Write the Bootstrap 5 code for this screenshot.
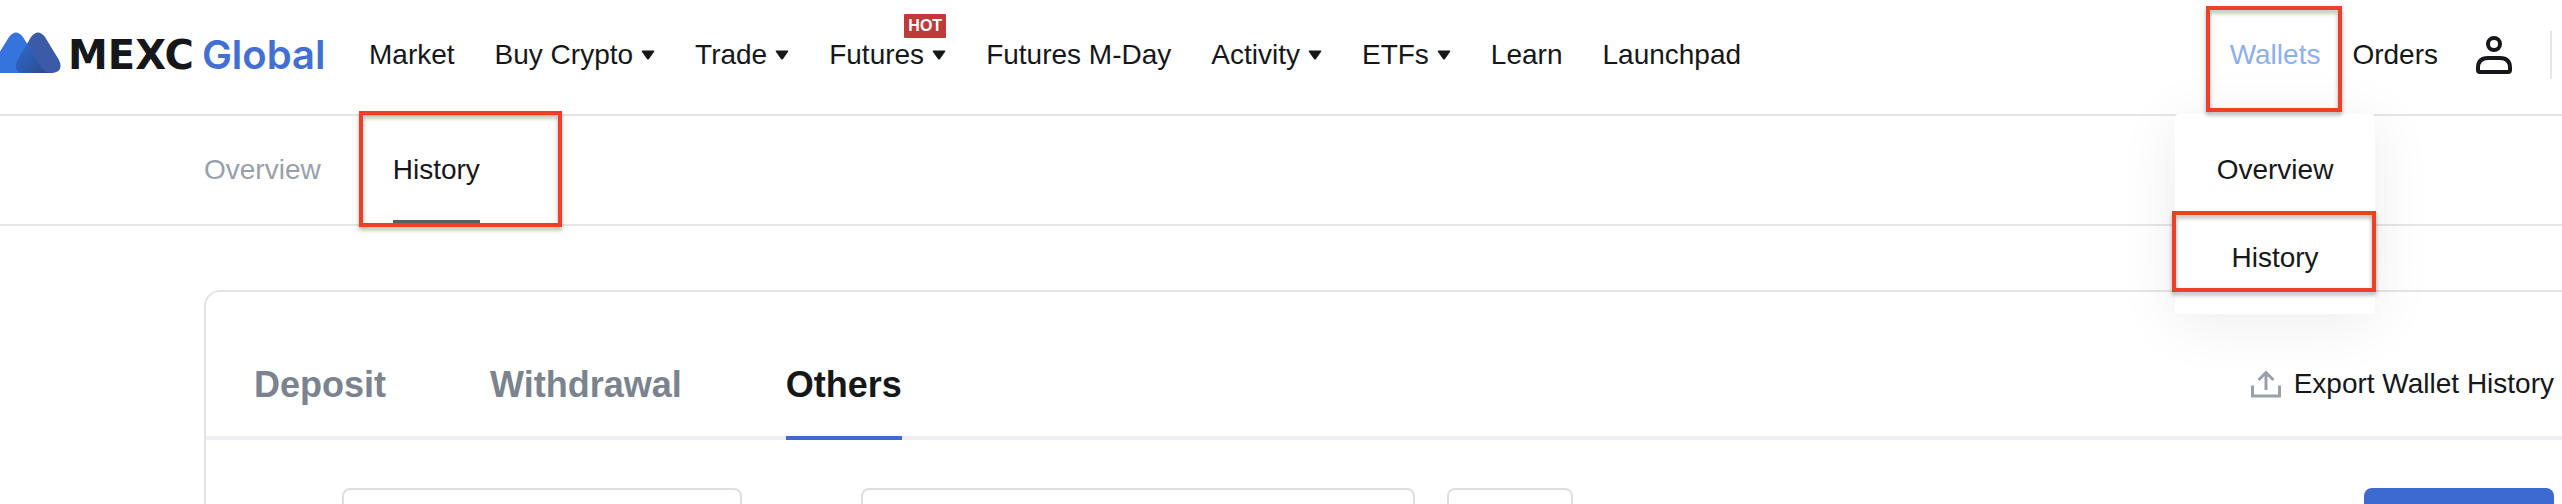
<!DOCTYPE html>
<html lang="en">
<head>
<meta charset="utf-8">
<meta name="viewport" content="width=device-width, initial-scale=1">
<title>MEXC Global - Wallet History</title>
<link href="https://cdn.jsdelivr.net/npm/bootstrap@5.3.0/dist/css/bootstrap.min.css" rel="stylesheet">
<style>
  :root { --ink: #16171a; --line: #e6e6e6; --brand: #3c6acf; --mark: #ee4027; }
  body { font-family: "Liberation Sans", Arial, sans-serif; font-size: 28px; line-height: 40px; color: var(--ink); background: #fff; }
  a { color: inherit; text-decoration: none; }
  .topbar { height: 116px; border-bottom: 2px solid var(--line); padding: 0 10px 4px 0; }
  .brand-link { width: 369px; padding-bottom: 4px; }
  .brand-mark { width: 62px; height: 42px; margin-right: 6px; }
  .brand-name { font: 700 40px/48px "DejaVu Sans", sans-serif; padding-top: 4px; }
  .brand-region { font: 600 40px/48px Inter, sans-serif; color: #4270d2; margin-left: 8px; padding-top: 4px; }
  .main-menu { gap: 40px; }
  .main-menu a { gap: 8px; }
  .caret { width: 14px; height: 10px; }
  .hot { top: 14px; padding: 0 4px; background: #c03a3a; color: #fff; font-weight: 700; font-size: 16px; line-height: 24px; border-radius: 1px; }
  .user-menu { gap: 32px; }
  .user-btn { margin-left: 6px; width: 36px; height: 38px; }
  .divider { width: 2px; height: 48px; background: var(--line); margin-left: 6px; }
  .wallet-link { color: #8cb0ee; }
  /* red frames that call out the steps */
  .callout::after { content: ""; position: absolute; z-index: 6; border: 4px solid var(--mark); filter: drop-shadow(0 3px 2px rgba(0,0,0,.3)); pointer-events: none; }
  .wallet-item.callout::after { inset: 6px -22px -2px -24px; }
  .wallet-menu { width: 200px; height: 200px; margin-top: 4px; padding: 12px 0; background: #fff; border-radius: 4px; box-shadow: 0 8px 60px rgba(0,0,0,.08); z-index: 5; }
  .wallet-menu a { display: block; line-height: 88px; text-align: center; }
  .wallet-menu .callout::after { inset: -3px -1px 10px -3px; }
  .subbar { height: 110px; border-bottom: 2px solid var(--line); padding-left: 204px; gap: 72px; }
  .subbar a { line-height: 108px; color: #98a1aa; }
  .subbar a.active { color: var(--ink); box-shadow: inset 0 -4px #5b5f68; }
  .subbar .callout::after { inset: -5px -82px -3px -34px; }
  .panel { margin: 64px 0 0 204px; border: 2px solid #e4e4e4; border-width: 2px 0 0 2px; border-radius: 16px 0 0 0; }
  .tab-row { height: 148px; border-bottom: 4px solid #edeff2; padding: 0 8px 0 48px; }
  .tab-list { gap: 104px; margin-bottom: -4px; }
  .tab-list a { display: block; font-size: 36px; font-weight: 700; line-height: 44px; padding: 71px 0 29px; border-bottom: 4px solid transparent; color: #7b848e; }
  .tab-list a.active { color: #16171a; border-color: var(--brand); }
  .export-btn { gap: 13px; padding: 0; border: 0; background: none; color: inherit; margin-top: 40px; }
  .filters { padding: 48px 8px 0 136px; }
  .field { height: 80px; border: 2px solid #dedede; border-radius: 8px; background: #fff; padding: 0 16px; }
  .field-type { width: 400px; margin-right: 119px; }
  .field-date { width: 554px; margin-right: 32px; }
  .field-short { width: 126px; }
  .search-btn { width: 190px; height: 80px; border: 0; border-radius: 8px; background: var(--brand); }
</style>
</head>
<body>
<div class="vh-100 overflow-hidden">
  <header class="topbar d-flex align-items-center">
    <a class="brand-link d-flex align-items-center flex-shrink-0" href="#">
      <svg class="brand-mark" viewBox="0 0 62 42" aria-hidden="true">
        <defs>
          <linearGradient id="fold" x1="0" y1=".2" x2="1" y2=".8"><stop offset=".4" stop-color="#2f66c4"/><stop offset="1" stop-color="#2b4b8e"/></linearGradient>
          <clipPath id="rightPeak"><path d="M31 5Q38-4 45 5L59 28Q64 39 53 41L22 41Q13 39 17 29Z"/></clipPath>
        </defs>
        <path d="M31 5Q38-4 45 5L59 28Q64 39 53 41L22 41Q13 39 17 29Z" fill="#3b5aa8"/>
        <path d="M9 5Q16-4 23 5L42 36Q45 41 52 41L-4 41L-4 26Z" fill="#3474dc"/>
        <path d="M9 5Q16-4 23 5L42 36Q45 41 52 41L-4 41L-4 26Z" fill="url(#fold)" clip-path="url(#rightPeak)"/>
      </svg>
      <span class="brand-name">MEXC</span><span class="brand-region">Global</span>
    </a>
    <nav class="h-100" aria-label="Main">
      <ul class="main-menu list-unstyled d-flex mb-0 h-100 text-nowrap">
        <li class="d-flex"><a class="d-flex align-items-center" href="#">Market</a></li>
        <li class="d-flex"><a class="d-flex align-items-center" href="#">Buy Crypto <svg class="caret" viewBox="0 0 14 10"><path d="M1.500 0.500h11q1.500 0 .6 1.300L8 9q-1 1-2 0L.9 1.800Q0 .5 1.500.5z" fill="#16171a"/></svg></a></li>
        <li class="d-flex"><a class="d-flex align-items-center" href="#">Trade <svg class="caret" viewBox="0 0 14 10"><path d="M1.500 0.500h11q1.500 0 .6 1.300L8 9q-1 1-2 0L.9 1.800Q0 .5 1.500.5z" fill="#16171a"/></svg></a></li>
        <li class="d-flex position-relative"><a class="d-flex align-items-center" href="#">Futures <svg class="caret" viewBox="0 0 14 10"><path d="M1.500 0.500h11q1.500 0 .6 1.300L8 9q-1 1-2 0L.9 1.800Q0 .5 1.500.5z" fill="#16171a"/></svg></a><span class="hot position-absolute end-0">HOT</span></li>
        <li class="d-flex"><a class="d-flex align-items-center" href="#">Futures M-Day</a></li>
        <li class="d-flex"><a class="d-flex align-items-center" href="#">Activity <svg class="caret" viewBox="0 0 14 10"><path d="M1.500 0.500h11q1.500 0 .6 1.300L8 9q-1 1-2 0L.9 1.800Q0 .5 1.500.5z" fill="#16171a"/></svg></a></li>
        <li class="d-flex"><a class="d-flex align-items-center" href="#">ETFs <svg class="caret" viewBox="0 0 14 10"><path d="M1.500 0.500h11q1.500 0 .6 1.300L8 9q-1 1-2 0L.9 1.800Q0 .5 1.500.5z" fill="#16171a"/></svg></a></li>
        <li class="d-flex"><a class="d-flex align-items-center" href="#">Learn</a></li>
        <li class="d-flex"><a class="d-flex align-items-center" href="#">Launchpad</a></li>
      </ul>
    </nav>
    <div class="user-menu d-flex align-items-center ms-auto h-100">
      <div class="wallet-item callout position-relative d-flex align-items-center h-100">
        <a class="wallet-link" href="#">Wallets</a>
        <div class="wallet-menu position-absolute top-100 start-50 translate-middle-x">
          <a href="#">Overview</a>
          <a class="callout position-relative" href="#">History</a>
        </div>
      </div>
      <a href="#">Orders</a>
      <button class="user-btn btn p-0 border-0 d-flex" type="button" aria-label="Account">
        <svg width="36" height="38" viewBox="0 0 36 38" fill="none" stroke="#16171a" stroke-width="4"><circle cx="18" cy="8" r="6"/><path d="M2 34V32Q2 22 12 22H24Q34 22 34 32V34Q34 36 32 36H4Q2 36 2 34Z"/></svg>
      </button>
      <span class="divider"></span>
    </div>
  </header>

  <nav class="subbar d-flex" aria-label="Wallet">
    <a href="#">Overview</a>
    <a class="active callout position-relative" href="#" aria-current="page">History</a>
  </nav>

  <main class="panel">
    <div class="tab-row d-flex justify-content-between align-items-center">
      <nav class="tab-list d-flex" aria-label="Records">
        <a href="#">Deposit</a>
        <a href="#">Withdrawal</a>
        <a class="active" href="#" aria-current="page">Others</a>
      </nav>
      <button class="export-btn d-flex align-items-center text-nowrap" type="button">
        <svg width="30" height="28" viewBox="0 0 30 28" fill="none" stroke="#98a1aa" stroke-width="3"><path d="M1.500 15.500V26H28.500V15.500M15 20V2.500M7.500 10L15 2.500L22.500 10"/></svg>
        Export Wallet History
      </button>
    </div>
    <form class="filters d-flex">
      <input class="field field-type" type="text" aria-label="Type">
      <input class="field field-date" type="text" aria-label="Time">
      <input class="field field-short" type="text" aria-label="Crypto">
      <button class="search-btn ms-auto" type="button" aria-label="Search"></button>
    </form>
  </main>
</div>
<script src="https://cdn.jsdelivr.net/npm/bootstrap@5.3.0/dist/js/bootstrap.bundle.min.js"></script>
</body>
</html>
